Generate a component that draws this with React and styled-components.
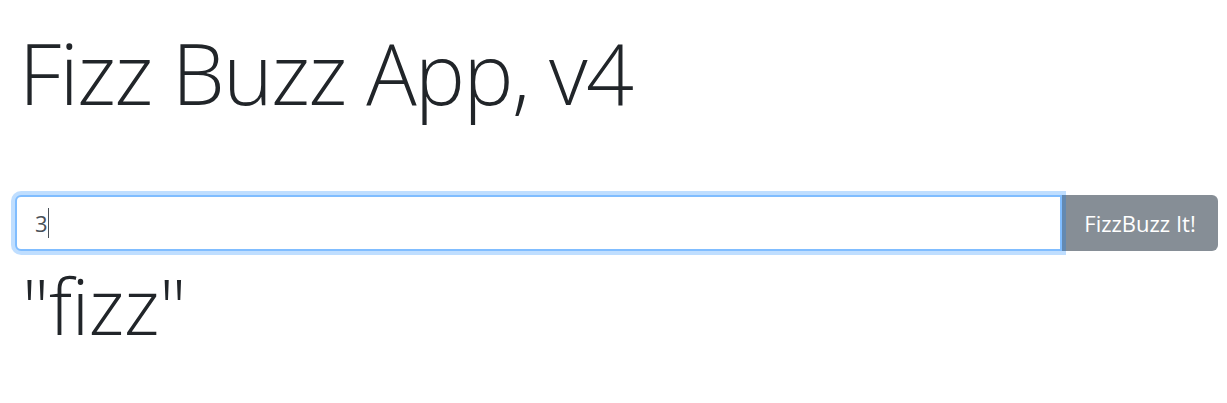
import React, { useState } from "react";
import styled, { createGlobalStyle } from "styled-components";

const GlobalStyle = createGlobalStyle`
  html, body {
    margin: 0;
    padding: 0;
    background: #fff;
  }
  body {
    font-family: "Open Sans", "Noto Sans", "Liberation Sans", sans-serif;
    color: #212529;
  }
`;

export default function App() {
  const [value, setValue] = useState("3");

  return (
    <>
      <GlobalStyle />
      <Page>
        <Title>Fizz Buzz App, v4</Title>
        <Form onSubmit={(e) => e.preventDefault()}>
          <InputWrap>
            <NumberInput
              autoFocus
              value={value}
              onChange={(e) => setValue(e.target.value)}
            />
            <Caret />
          </InputWrap>
          <SubmitButton type="submit">FizzBuzz It!</SubmitButton>
        </Form>
        <Result>"fizz"</Result>
      </Page>
    </>
  );
}

const Page = styled.div`
  display: flex;
  flex-direction: column;
  padding: 23px 9px 0 15px;
`;

const Title = styled.h1`
  margin: 0 0 0 4px;
  font-size: 84px;
  font-weight: 300;
  line-height: 100px;
  letter-spacing: -1.5px;
`;

const Form = styled.form`
  display: flex;
  align-items: stretch;
  margin-top: 72px;
  height: 56px;
`;

const InputWrap = styled.div`
  position: relative;
  flex: 1;
  display: flex;
  min-width: 0;
`;

const NumberInput = styled.input`
  flex: 1;
  min-width: 0;
  box-sizing: border-box;
  height: 100%;
  padding: 0 18px;
  font-family: inherit;
  font-size: 22px;
  font-weight: 400;
  color: #495057;
  caret-color: transparent;
  background: #fff;
  border: 2px solid #80bdff;
  border-radius: 6px 0 0 6px;
  box-shadow: 0 0 0 4px rgba(0, 123, 255, 0.25);
  outline: none;
`;

const Caret = styled.span`
  position: absolute;
  left: 33px;
  top: 13px;
  width: 1px;
  height: 30px;
  background: #495057;
  pointer-events: none;
`;

const SubmitButton = styled.button`
  flex: none;
  width: 156px;
  box-sizing: border-box;
  padding: 0;
  font-family: inherit;
  font-size: 22px;
  font-weight: 400;
  color: #fff;
  background: #868e96;
  border: none;
  border-radius: 0 6px 6px 0;
  cursor: pointer;
`;

const Result = styled.div`
  margin: 9px 0 0 7px;
  font-size: 77px;
  font-weight: 300;
  line-height: 92px;
  letter-spacing: -0.3px;
`;
